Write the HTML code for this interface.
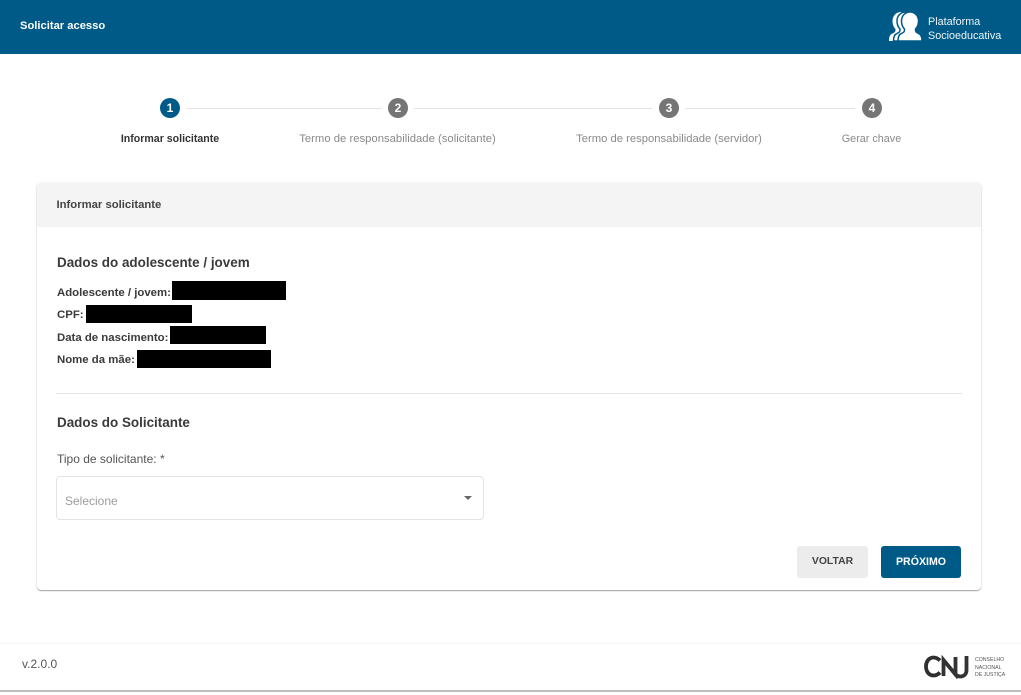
<!DOCTYPE html>
<html lang="pt-BR">
<head>
<meta charset="utf-8">
<title>Solicitar acesso</title>
<style>
html,body{margin:0;padding:0;background:#fff}
body{width:1021px;height:695px;position:relative;overflow:hidden;font-family:"Liberation Sans",Arial,sans-serif;color:#3c3c3c}
.a{position:absolute;white-space:nowrap}
.header{left:0;top:0;width:1021px;height:54px;background:#005a87}
.circle{width:20px;height:20px;border-radius:50%;background:#757575;color:#fff;font-size:12px;font-weight:bold;line-height:20px;text-align:center}
.line{height:1px;background:#e2e2e2;top:108px}
.step{top:131.500px;font-size:11.3px;line-height:14px;color:#8a8a8a;transform:translateX(-50%)}
.card{left:37px;top:183px;width:944px;height:407px;background:#fff;border-radius:4px;box-shadow:0 1px 1px rgba(0,0,0,.35),0 0 3px rgba(0,0,0,.08)}
.cardhead{left:37px;top:183px;width:944px;height:44px;background:#f4f4f4;border-radius:4px 4px 0 0}
.b{font-weight:bold;font-size:11.4px;line-height:14px;color:#3a3a3a}
.h{font-weight:bold;font-size:13.45px;line-height:18px;color:#3a3a3a}
.k{background:#000}
</style>
</head>
<body>
<div class="a header"></div>
<div class="a" style="left:20px;top:19px;font-size:11.2px;line-height:14px;font-weight:bold;color:#fff">Solicitar acesso</div>
<svg class="a" style="left:889px;top:11px" width="34" height="31" viewBox="0 0 34 31">
<defs><path id="p" d="M21 1c5 0 8.500 4 8.500 9 0 3-1 6-3 8v1c0 2 1 2.500 3 3.500 3 1 3.500 4 3.500 7.500H9c0-3.500.5-6.500 3.500-7.500 2-1 3-1.500 3-3.500v-1c-2-2-3-5-3-8 0-5 3.500-9 8.500-9z"/></defs>
<use href="#p" x="-9" fill="#fff"/>
<use href="#p" x="-4.500" fill="#fff" stroke="#005a87" stroke-width="1.500"/>
<use href="#p" fill="#fff" stroke="#005a87" stroke-width="1.500"/>
</svg>
<div class="a" style="left:928px;top:16px;font-size:10.8px;line-height:13.5px;color:#eef4f7">Plataforma<br>Socioeducativa</div>

<div class="a line" style="left:187px;width:195px"></div>
<div class="a line" style="left:414px;width:238px"></div>
<div class="a line" style="left:685px;width:170px"></div>
<div class="a circle" style="left:160px;top:98px;background:#005a87">1</div>
<div class="a circle" style="left:388px;top:98px">2</div>
<div class="a circle" style="left:659px;top:98px">3</div>
<div class="a circle" style="left:862px;top:98px">4</div>
<div class="a step" style="left:170px;color:#333;font-weight:bold;font-size:10.6px">Informar solicitante</div>
<div class="a step" style="left:397.5px">Termo de responsabilidade (solicitante)</div>
<div class="a step" style="left:669px;font-size:11.25px">Termo de responsabilidade (servidor)</div>
<div class="a step" style="left:871.500px;font-size:10.8px">Gerar chave</div>

<div class="a card"></div>
<div class="a cardhead"></div>
<div class="a b" style="left:56.500px;top:198px;font-size:11.3px;color:#444">Informar solicitante</div>

<div class="a h" style="left:57px;top:253.500px">Dados do adolescente / jovem</div>
<div class="a b" style="left:57px;top:285.500px">Adolescente / jovem:</div>
<div class="a k" style="left:172px;top:281px;width:114px;height:19px"></div>
<div class="a b" style="left:57px;top:308px">CPF:</div>
<div class="a k" style="left:86px;top:305px;width:106px;height:18px"></div>
<div class="a b" style="left:57px;top:330.500px">Data de nascimento:</div>
<div class="a k" style="left:170px;top:326px;width:96px;height:18px"></div>
<div class="a b" style="left:57px;top:353px">Nome da mãe:</div>
<div class="a k" style="left:137px;top:350px;width:134px;height:18px"></div>

<div class="a" style="left:56px;top:393px;width:906px;height:1px;background:#e4e4e4"></div>
<div class="a h" style="left:57px;top:414px">Dados do Solicitante</div>
<div class="a" style="left:57px;top:452px;font-size:12px;line-height:14px;color:#555">Tipo de solicitante: *</div>
<div class="a" style="left:56px;top:476px;width:426px;height:42px;border:1px solid #e3e3e3;border-radius:4px;background:#fff"></div>
<div class="a" style="left:65px;top:494px;font-size:12px;line-height:14px;color:#9c9c9c">Selecione</div>
<div class="a" style="left:464px;top:496px;width:0;height:0;border-left:4.5px solid transparent;border-right:4.5px solid transparent;border-top:4.5px solid #666"></div>

<div class="a" style="left:797px;top:546px;width:71px;height:32px;background:#ececec;border-radius:3px;color:#444;font-size:10.4px;font-weight:bold;line-height:32px;text-align:center">VOLTAR</div>
<div class="a" style="left:881px;top:546px;width:80px;height:32px;background:#005a87;border-radius:3px;color:#fff;font-size:10.6px;font-weight:bold;line-height:32px;text-align:center">PRÓXIMO</div>

<div class="a" style="left:0;top:643px;width:1021px;height:1px;background:#f3f3f3"></div>
<div class="a" style="left:0;top:690px;width:1021px;height:2px;background:#bdbdbd"></div>
<div class="a" style="left:22px;top:657px;font-size:12px;line-height:14px;color:#555">v.2.0.0</div>

<svg class="a" style="left:924px;top:655px" width="48" height="24" viewBox="0 0 48 24">
<g fill="none" stroke="#333" stroke-width="3.800">
<path d="M16 5.500C14 3.500 12 2.500 9.500 2.500 5 2.500 2 6.500 2 11.500s3 9 7.500 9c2.500 0 4.500-1 6.500-3" stroke="#2f2f2f"/>
<path d="M19.500 21V5l12 14.500V2"/>
<path d="M42.500 1v14c0 4-2.500 6.500-6 6.500-2 0-3.500-.5-5-2"/>
</g>
</svg>
<div class="a" style="left:975px;top:657px;font-size:5.200px;line-height:7.500px;color:#555">CONSELHO<br>NACIONAL<br>DE JUSTIÇA</div>
</body>
</html>
